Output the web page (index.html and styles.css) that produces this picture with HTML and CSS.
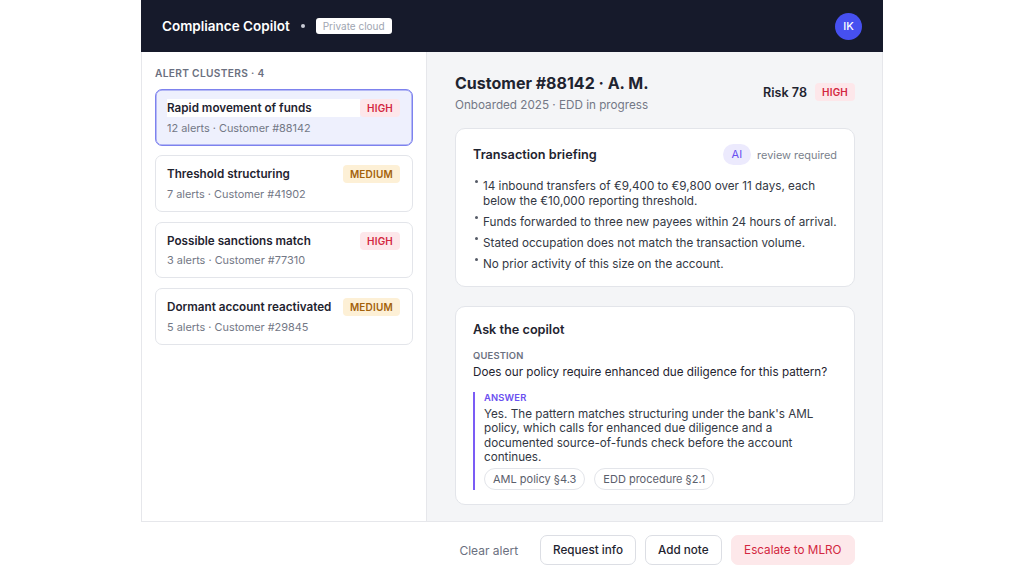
FILE: index.html
```html
<!DOCTYPE html>
<html lang="en">
<head>
    <meta charset="UTF-8">
    <title>Compliance Copilot</title>
    <link rel="stylesheet" href="styles.css">
</head>
<body>
    <div class="app">
        <header class="topbar">
            <div class="brand">
                <span class="brand-name">Compliance Copilot</span>
                <span class="brand-dot"></span>
                <span class="env-tag">Private cloud</span>
            </div>
            <div class="avatar">IK</div>
        </header>

        <div class="workspace">
            <aside class="sidebar">
                <div class="section-label">Alert clusters · 4</div>
                <div class="cluster selected">
                    <div class="cluster-top">
                        <span class="cluster-title">Rapid movement of funds</span>
                        <span class="badge high">High</span>
                    </div>
                    <div class="cluster-meta">12 alerts · Customer #88142</div>
                </div>
                <div class="cluster">
                    <div class="cluster-top">
                        <span class="cluster-title">Threshold structuring</span>
                        <span class="badge medium">Medium</span>
                    </div>
                    <div class="cluster-meta">7 alerts · Customer #41902</div>
                </div>
                <div class="cluster">
                    <div class="cluster-top">
                        <span class="cluster-title">Possible sanctions match</span>
                        <span class="badge high">High</span>
                    </div>
                    <div class="cluster-meta">3 alerts · Customer #77310</div>
                </div>
                <div class="cluster">
                    <div class="cluster-top">
                        <span class="cluster-title">Dormant account reactivated</span>
                        <span class="badge medium">Medium</span>
                    </div>
                    <div class="cluster-meta">5 alerts · Customer #29845</div>
                </div>
            </aside>

            <main class="detail">
                <div class="customer-head">
                    <div>
                        <h1>Customer #88142 · A. M.</h1>
                        <p class="customer-sub">Onboarded 2025 · EDD in progress</p>
                    </div>
                    <div class="risk">
                        <span class="risk-score">Risk 78</span>
                        <span class="badge high">High</span>
                    </div>
                </div>

                <section class="card">
                    <div class="card-head">
                        <h2>Transaction briefing</h2>
                        <div class="review">
                            <span class="ai-pill">AI</span>
                            <span class="review-text">review required</span>
                        </div>
                    </div>
                    <ul class="briefing">
                        <li>14 inbound transfers of €9,400 to €9,800 over 11 days, each below the €10,000 reporting threshold.</li>
                        <li>Funds forwarded to three new payees within 24 hours of arrival.</li>
                        <li>Stated occupation does not match the transaction volume.</li>
                        <li>No prior activity of this size on the account.</li>
                    </ul>
                </section>

                <section class="card">
                    <h2>Ask the copilot</h2>
                    <div class="qa-label">Question</div>
                    <p class="question">Does our policy require enhanced due diligence for this pattern?</p>
                    <div class="answer">
                        <div class="qa-label answer-label">Answer</div>
                        <p>Yes. The pattern matches structuring under the bank's AML policy, which calls for enhanced due diligence and a documented source-of-funds check before the account continues.</p>
                        <div class="sources">
                            <span class="chip">AML policy §4.3</span>
                            <span class="chip">EDD procedure §2.1</span>
                        </div>
                    </div>
                </section>
            </main>
        </div>

        <footer class="actions">
            <button class="btn ghost">Clear alert</button>
            <button class="btn">Request info</button>
            <button class="btn">Add note</button>
            <button class="btn danger">Escalate to MLRO</button>
        </footer>
    </div>
</body>
</html>
```

FILE: styles.css
```css
* {
    box-sizing: border-box;
}
body {
    margin: 0;
    background: #ffffff;
    color: #1f2430;
    font-family: 'Inter', 'Noto Sans', sans-serif;
    overflow: hidden;
}
h1, h2, p, ul {
    margin: 0;
}
.app {
    width: 742px;
    height: 100vh;
    margin: 0 auto;
    display: grid;
    grid-template-rows: 52px 1fr 56px;
}

/* top bar */
.topbar {
    background: #161a2b;
    color: #fff;
    display: flex;
    align-items: center;
    justify-content: space-between;
    padding: 0 21px 0 21px;
}
.brand {
    display: flex;
    align-items: center;
    gap: 11px;
}
.brand-name {
    font-size: 13.5px;
    font-weight: 600;
}
.brand-dot {
    width: 4px;
    height: 4px;
    border-radius: 50%;
    background: #c9ccd6;
}
.env-tag {
    background: #fff;
    color: #a0a5b1;
    font-size: 10px;
    line-height: 12px;
    padding: 2px 7px;
    border-radius: 3px;
}
.avatar {
    width: 27px;
    height: 27px;
    border-radius: 50%;
    background: #4650f0;
    color: #fff;
    font-size: 11px;
    font-weight: 500;
    display: flex;
    align-items: center;
    justify-content: center;
}

/* body */
.workspace {
    display: grid;
    grid-template-columns: 285px 1fr;
    border-left: 1px solid #e6e7eb;
    border-right: 1px solid #e6e7eb;
    border-bottom: 1px solid #e6e7eb;
    min-height: 0;
}
.sidebar {
    background: #fff;
    border-right: 1px solid #e6e7eb;
    padding: 15px 13px;
    display: flex;
    flex-direction: column;
    gap: 9.7px;
}
.section-label {
    font-size: 10.2px;
    line-height: 13px;
    font-weight: 600;
    color: #6b7080;
    text-transform: uppercase;
    letter-spacing: 0.03em;
    margin-bottom: -0.7px;
}
.cluster {
    border: 1px solid #e3e5ea;
    border-radius: 7px;
    padding: 9px 12px 10px 11px;
    background: #fff;
}
.cluster.selected {
    background: #eef0fd;
    border-color: #7d82ee;
    box-shadow: inset 0 0 0 0.5px #7d82ee;
}
.cluster-top {
    display: flex;
    justify-content: space-between;
    height: 18px;
}
.cluster-title {
    font-size: 11.7px;
    font-weight: 600;
    color: #1f2430;
    background: #fff;
    flex: 1;
    display: flex;
    align-items: center;
}
.cluster-meta {
    font-size: 10.9px;
    line-height: 14px;
    color: #737886;
    margin-top: 3.7px;
}
.badge {
    font-size: 10px;
    line-height: 12px;
    font-weight: 600;
    text-transform: uppercase;
    padding: 3px 7px;
    border-radius: 4px;
    letter-spacing: 0.02em;
}
.badge.high {
    background: #fde7ea;
    color: #d32740;
}
.badge.medium {
    background: #fdf0d6;
    color: #a3620b;
}

/* detail */
.detail {
    background: #f4f5f7;
    padding: 21px 27px 0 28px;
    display: flex;
    flex-direction: column;
    gap: 18px;
    overflow: hidden;
}
.customer-head {
    display: flex;
    justify-content: space-between;
    align-items: flex-start;
    margin-bottom: -3px;
}
.customer-head h1 {
    font-size: 16px;
    font-weight: 700;
    line-height: 20px;
}
.customer-sub {
    font-size: 11.7px;
    line-height: 15px;
    color: #737886;
    margin-top: 5px;
}
.risk {
    display: flex;
    align-items: center;
    gap: 8px;
    margin-top: 10px;
}
.risk-score {
    font-size: 12.6px;
    font-weight: 600;
}
.card {
    background: #fff;
    border: 1px solid #e3e5ea;
    border-radius: 10px;
    padding: 15px 17px 15px 17px;
}
.card + .card {
    margin-top: 1px;
    padding-bottom: 14px;
}
.card h2 {
    font-size: 12.7px;
    line-height: 16px;
    font-weight: 600;
}
.card-head {
    display: flex;
    justify-content: space-between;
    align-items: center;
    height: 21px;
}
.review {
    display: flex;
    align-items: center;
    gap: 6px;
}
.ai-pill {
    background: #eceafd;
    color: #6a4ff0;
    font-size: 11px;
    line-height: 21px;
    padding: 0 9px;
    border-radius: 11px;
}
.review-text {
    font-size: 10.9px;
    color: #7a7f8c;
}
.briefing {
    list-style: none;
    padding: 0 0 0 2px;
    margin-top: 14px;
    font-size: 11.7px;
    line-height: 14.5px;
    color: #333844;
}
.briefing li {
    position: relative;
    padding-left: 8px;
    margin-bottom: 6.5px;
}
.briefing li:last-child {
    margin-bottom: 0;
}
.briefing li::before {
    content: '';
    position: absolute;
    left: 0;
    top: 1px;
    width: 3px;
    height: 3px;
    border-radius: 50%;
    background: #555a66;
}
.qa-label {
    font-size: 9.4px;
    line-height: 12px;
    font-weight: 600;
    text-transform: uppercase;
    color: #6b7080;
    letter-spacing: 0.02em;
    margin-top: 12px;
}
.question {
    font-size: 11.7px;
    line-height: 15px;
    color: #1f2430;
    margin-top: 3px;
}
.answer {
    border-left: 2px solid #7b5cf5;
    padding-left: 9px;
    margin-top: 12px;
}
.answer-label {
    color: #6a4ff0;
    margin-top: 0;
}
.answer p {
    font-size: 11.7px;
    line-height: 14.4px;
    color: #333844;
    margin-top: 3px;
}
.sources {
    display: flex;
    gap: 9px;
    margin-top: 3px;
}
.chip {
    font-size: 11px;
    line-height: 14px;
    color: #5b606c;
    border: 1px solid #e3e5ea;
    border-radius: 11px;
    padding: 3px 8px;
}

/* footer */
.actions {
    display: flex;
    align-items: center;
    justify-content: flex-end;
    gap: 9px;
    padding-right: 28px;
}
.btn {
    font-family: inherit;
    font-size: 11.7px;
    font-weight: 500;
    color: #1f2430;
    background: #fff;
    border: 1px solid #dcdee4;
    border-radius: 7px;
    height: 30px;
    padding: 0 12px;
    cursor: pointer;
}
.btn.ghost {
    border-color: transparent;
    background: transparent;
    color: #6b7080;
    font-weight: 400;
    font-size: 12px;
}
.btn.danger {
    background: #fde8ea;
    border-color: #fde8ea;
    color: #d32740;
    font-weight: 400;
    padding: 0 12.5px;
}
```
